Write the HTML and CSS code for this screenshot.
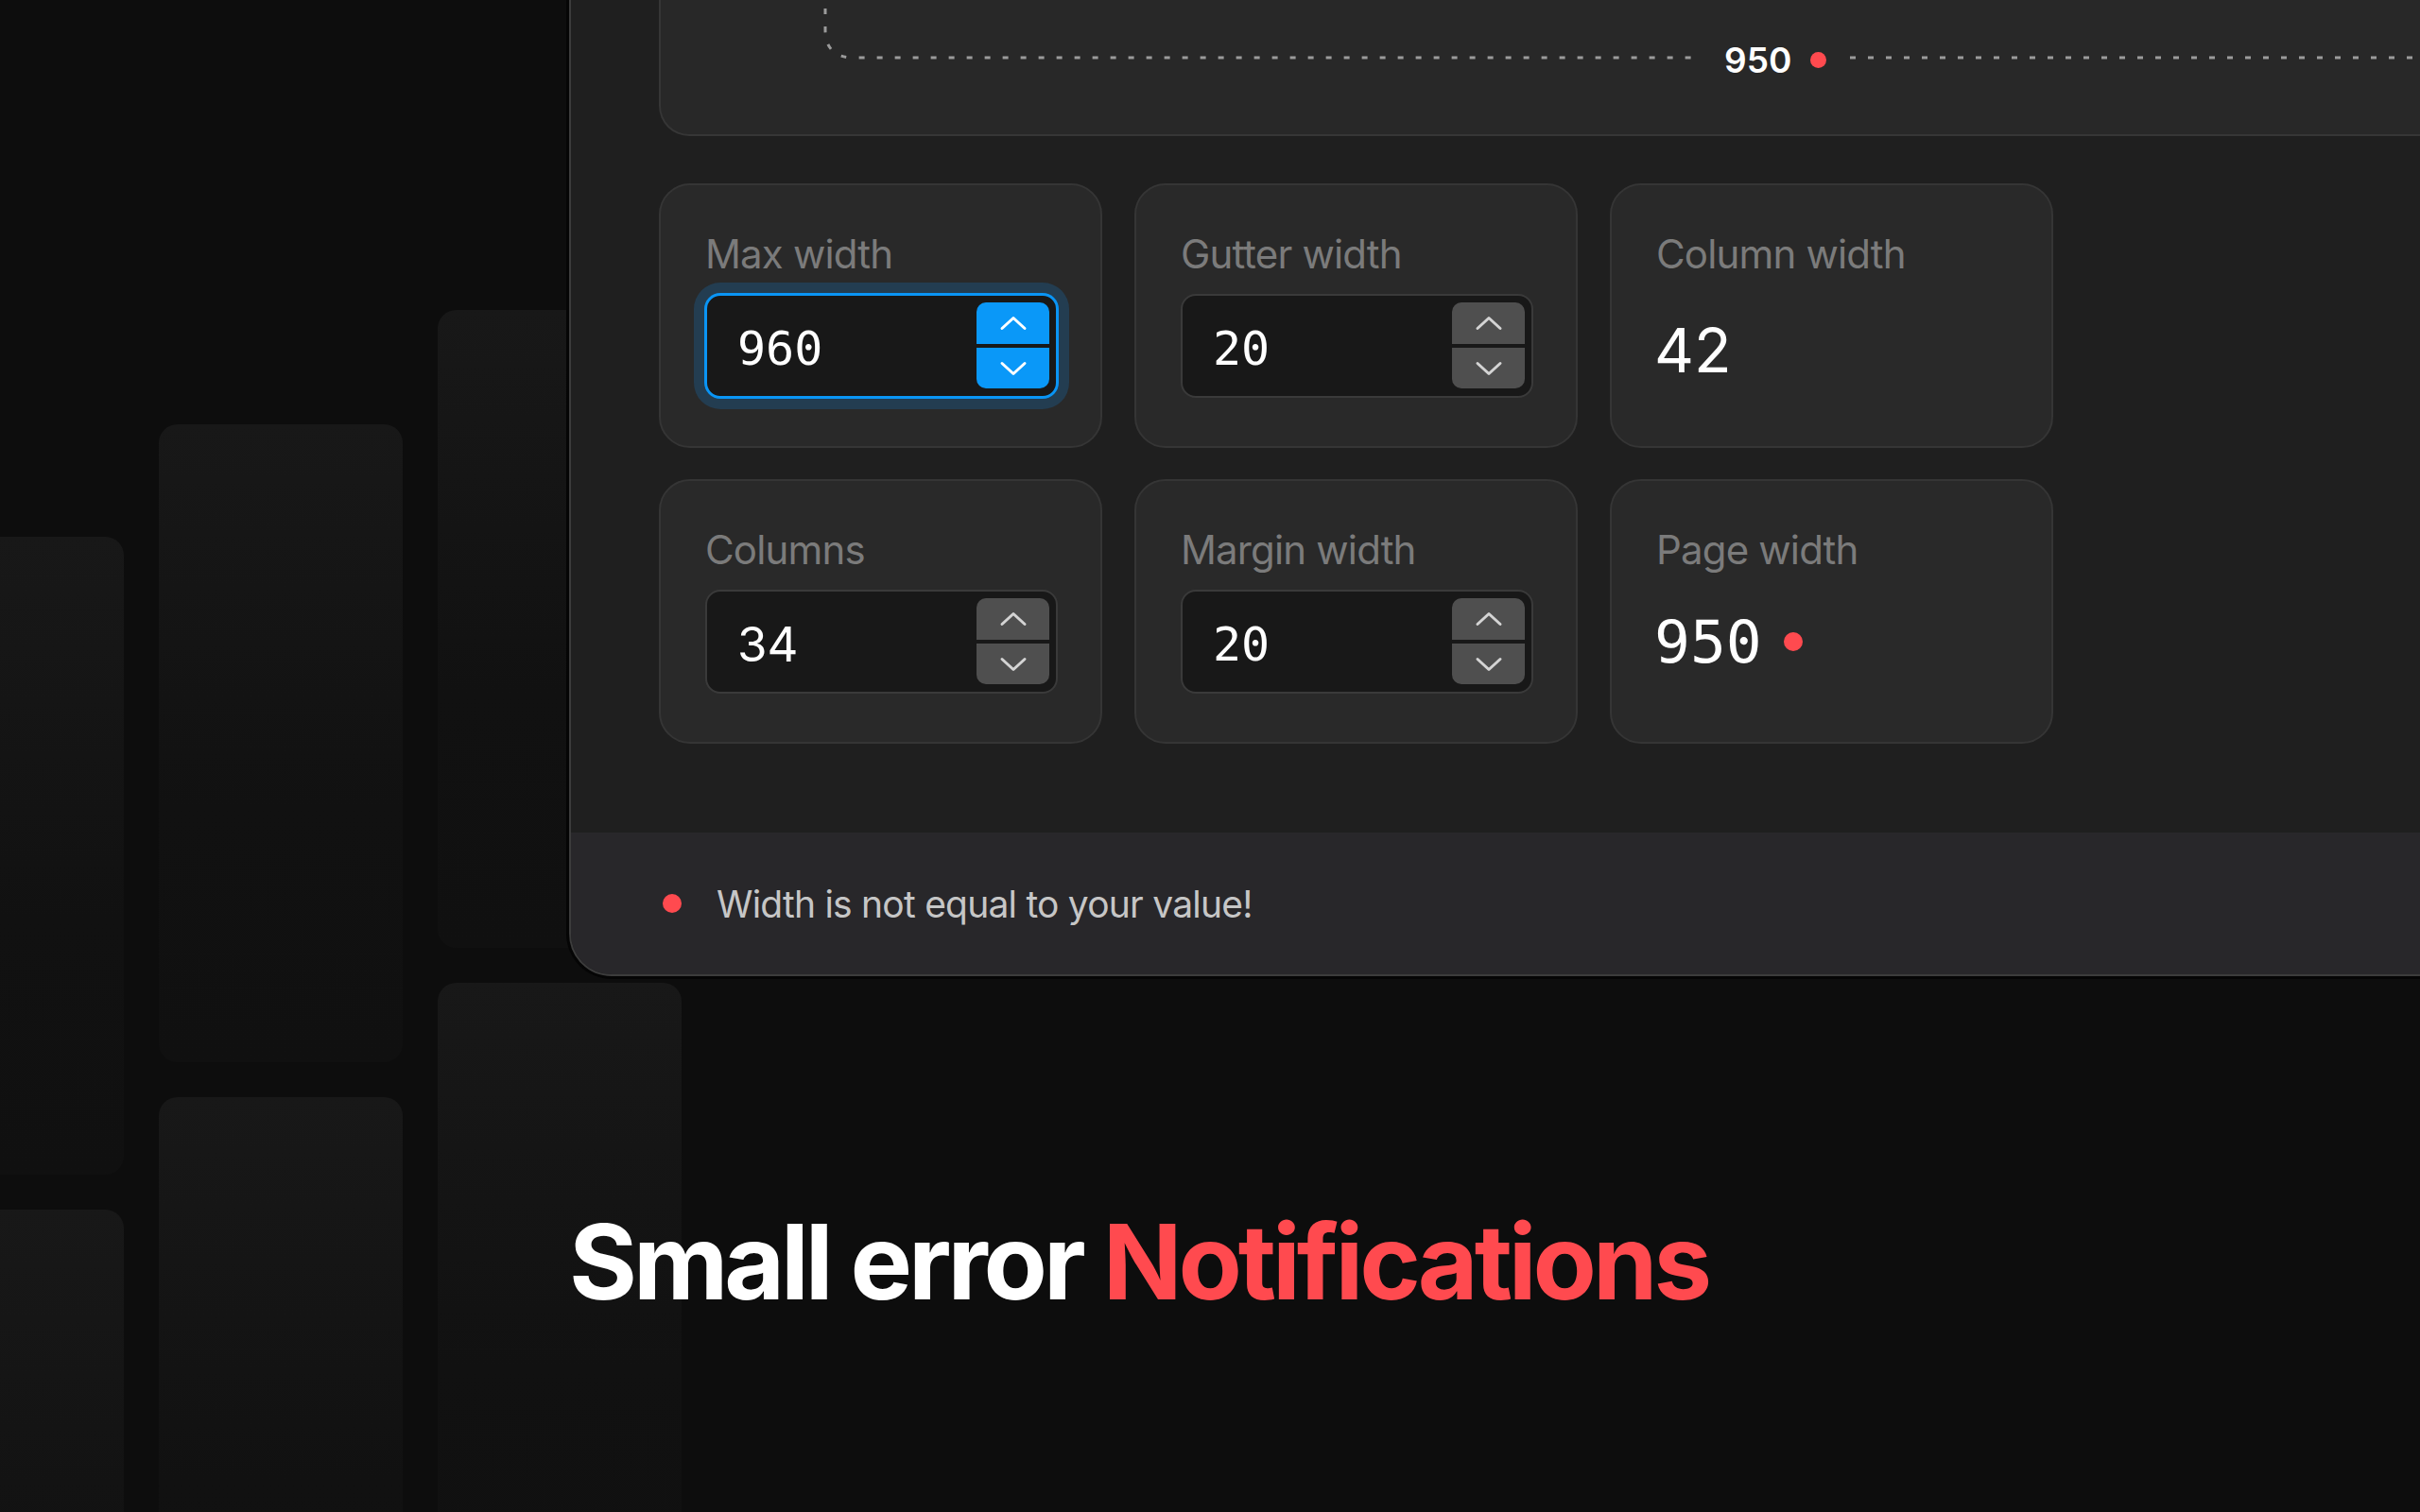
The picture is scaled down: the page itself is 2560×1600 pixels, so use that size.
FILE: index.html
```html
<html>

<head>
    <title>
        Grid settings
    </title>
    <link rel="stylesheet" href="styles.css">
</head>

<body>
    <div class="stage">

        <div class="backdrop">
            <div class="tile-col col-1">
                <div class="tile"></div>
                <div class="tile"></div>
            </div>
            <div class="tile-col col-2">
                <div class="tile"></div>
                <div class="tile"></div>
            </div>
            <div class="tile-col col-3">
                <div class="tile"></div>
                <div class="tile"></div>
            </div>
        </div>

        <div class="content">
            <div class="panel">
                <div class="panel-main">

                    <div class="preview">
                        <div class="guide">
                            <svg class="guide-left" width="929" height="218">
                                <path d="M2 -10 V107 Q2 137 32 137 H929" />
                            </svg>
                            <div class="guide-label">
                                <span>950</span>
                                <i class="dot dot-small"></i>
                            </div>
                            <svg class="guide-right" height="218">
                                <line x1="0" y1="137" x2="100%" y2="137" />
                            </svg>
                        </div>
                    </div>

                    <div class="fields">
                        <div class="field">
                            <div class="field-label">Max width</div>
                            <div class="stepper-input is-focused">
                                <span class="num-mono">960</span>
                                <div class="steps">
                                    <div class="step step-up">
                                        <svg width="30" height="18"><path d="M3 14.5 L15 3.5 L27 14.5" /></svg>
                                    </div>
                                    <div class="step step-down">
                                        <svg width="30" height="18"><path d="M3 3.5 L15 14.5 L27 3.5" /></svg>
                                    </div>
                                </div>
                            </div>
                        </div>
                        <div class="field">
                            <div class="field-label">Gutter width</div>
                            <div class="stepper-input">
                                <span class="num-mono">20</span>
                                <div class="steps">
                                    <div class="step step-up">
                                        <svg width="30" height="18"><path d="M3 14.5 L15 3.5 L27 14.5" /></svg>
                                    </div>
                                    <div class="step step-down">
                                        <svg width="30" height="18"><path d="M3 3.5 L15 14.5 L27 3.5" /></svg>
                                    </div>
                                </div>
                            </div>
                        </div>
                        <div class="field">
                            <div class="field-label">Column width</div>
                            <div class="static-value">
                                <span class="big-sans">42</span>
                            </div>
                        </div>
                        <div class="field">
                            <div class="field-label">Columns</div>
                            <div class="stepper-input">
                                <span class="num-sans">34</span>
                                <div class="steps">
                                    <div class="step step-up">
                                        <svg width="30" height="18"><path d="M3 14.5 L15 3.5 L27 14.5" /></svg>
                                    </div>
                                    <div class="step step-down">
                                        <svg width="30" height="18"><path d="M3 3.5 L15 14.5 L27 3.5" /></svg>
                                    </div>
                                </div>
                            </div>
                        </div>
                        <div class="field">
                            <div class="field-label">Margin width</div>
                            <div class="stepper-input">
                                <span class="num-mono">20</span>
                                <div class="steps">
                                    <div class="step step-up">
                                        <svg width="30" height="18"><path d="M3 14.5 L15 3.5 L27 14.5" /></svg>
                                    </div>
                                    <div class="step step-down">
                                        <svg width="30" height="18"><path d="M3 3.5 L15 14.5 L27 3.5" /></svg>
                                    </div>
                                </div>
                            </div>
                        </div>
                        <div class="field">
                            <div class="field-label">Page width</div>
                            <div class="static-value">
                                <span class="big-mono">950</span>
                                <i class="dot"></i>
                            </div>
                        </div>
                    </div>

                </div>

                <div class="panel-footer">
                    <i class="dot"></i>
                    <span>Width is not equal to your value!</span>
                </div>
            </div>

            <h1 class="headline">Small error <span class="accent">Notifications</span></h1>
        </div>

    </div>
</body>

</html>
```

FILE: styles.css
```css
body {
    margin: 0;
    background-color: #0d0d0d;
    font-family: Inter, "Noto Sans", sans-serif;
}

.stage {
    position: relative;
    width: 2560px;
    height: 1600px;
    overflow: hidden;
}

/* decorative tiles behind everything */
.backdrop {
    position: absolute;
    top: 0;
    left: -127px;
    display: flex;
    gap: 37px;
}

.tile-col {
    display: flex;
    flex-direction: column;
    gap: 37px;
    width: 258px;
}

.col-1 {
    padding-top: 568px;
}

.col-2 {
    padding-top: 449px;
}

.col-3 {
    padding-top: 328px;
}

.tile {
    height: 675px;
    border-radius: 20px;
    background: linear-gradient(180deg, #181818 0%, #111111 60%, #101010 100%);
}

.content {
    position: relative;
    z-index: 1;
    padding-left: 602px;
}

.panel {
    margin-top: -80px;
    width: 2100px;
    background-color: #1f1f1f;
    border: 2px solid #3c3c3c;
    border-radius: 0 0 0 45px;
    overflow: hidden;
    box-shadow: 0 0 0 3px #050505;
}

.panel-main {
    padding: 0 0 94px 93px;
}

.preview {
    height: 218px;
    background-color: #282828;
    border: 2px solid #363636;
    border-top: none;
    border-radius: 0 0 0 32px;
    padding-left: 172px;
    padding-top: 2px;
}

.guide {
    display: flex;
    height: 218px;
}

.guide svg path,
.guide svg line {
    fill: none;
    stroke: #9b9b9b;
    stroke-width: 3;
    stroke-dasharray: 6 13;
}

.guide-left {
    flex: none;
}

.guide-right {
    flex: 1;
}

.guide-label {
    display: flex;
    align-items: center;
    gap: 20px;
    width: 157px;
    box-sizing: border-box;
    height: 44px;
    margin-top: 117px;
    padding-left: 24px;
    color: #ffffff;
    font-size: 37px;
    font-weight: 600;
}

.dot {
    display: block;
    width: 20px;
    height: 20px;
    border-radius: 50%;
    background-color: #ff4a4f;
}

.dot-small {
    width: 17px;
    height: 17px;
}

.fields {
    display: grid;
    grid-template-columns: repeat(3, 469px);
    grid-auto-rows: 280px;
    column-gap: 34px;
    row-gap: 33px;
    margin-top: 50px;
}

.field {
    box-sizing: border-box;
    background-color: #292929;
    border: 2px solid #353535;
    border-radius: 33px;
    padding: 51px 0 0 47px;
}

.field-label {
    font-size: 42px;
    line-height: 1;
    padding-top: 1px;
    margin-bottom: -1px;
    color: #7b7b7b;
    letter-spacing: -0.02em;
}

.stepper-input {
    box-sizing: border-box;
    display: flex;
    align-items: center;
    justify-content: space-between;
    width: 373px;
    height: 110px;
    margin-top: 22px;
    padding: 7px 7px 8px 32px;
    background-color: #181818;
    border: 2px solid #3a3a3a;
    border-radius: 16px;
    color: #ffffff;
}

.stepper-input.is-focused {
    border-color: #0a95f5;
    box-shadow: 0 0 0 1px #0a95f5, 0 0 0 12px #233d51;
}

.num-mono {
    font-family: "DejaVu Sans Mono", monospace;
    font-size: 50px;
    line-height: 1;
    margin-top: 6px;
}

.num-sans {
    font-size: 51px;
    line-height: 1;
    margin-top: 6px;
}

.steps {
    display: flex;
    flex-direction: column;
    gap: 4px;
}

.step {
    display: flex;
    align-items: center;
    justify-content: center;
    width: 77px;
    height: 44px;
    background-color: #4f4f4f;
}

.step-up {
    border-radius: 10px 10px 0 0;
}

.step-down {
    height: 43px;
    border-radius: 0 0 10px 10px;
}

.step svg path {
    fill: none;
    stroke: #d4d4d4;
    stroke-width: 3;
    stroke-linecap: round;
    stroke-linejoin: round;
}

.is-focused .step {
    background-color: #0a98f8;
}

.is-focused .step svg path {
    stroke: #ffffff;
}

.static-value {
    display: flex;
    align-items: center;
    gap: 23px;
    height: 110px;
    margin-top: 22px;
    color: #ffffff;
}

.big-sans {
    font-size: 65px;
    line-height: 1;
    margin-top: 8px;
    margin-left: -2px;
}

.big-mono {
    font-family: "DejaVu Sans Mono", monospace;
    font-size: 63px;
    line-height: 1;
    margin-left: -2px;
}

.panel-footer {
    display: flex;
    align-items: center;
    gap: 37px;
    height: 150px;
    padding-left: 97px;
    background-color: #28272a;
    color: #c6c6c6;
    font-size: 39px;
    letter-spacing: -0.02em;
}

.headline {
    margin: 247px 0 0 0;
    font-size: 110px;
    line-height: 1;
    font-weight: 700;
    letter-spacing: -0.037em;
    color: #ffffff;
}

.accent {
    color: #ff4a4f;
}
```
